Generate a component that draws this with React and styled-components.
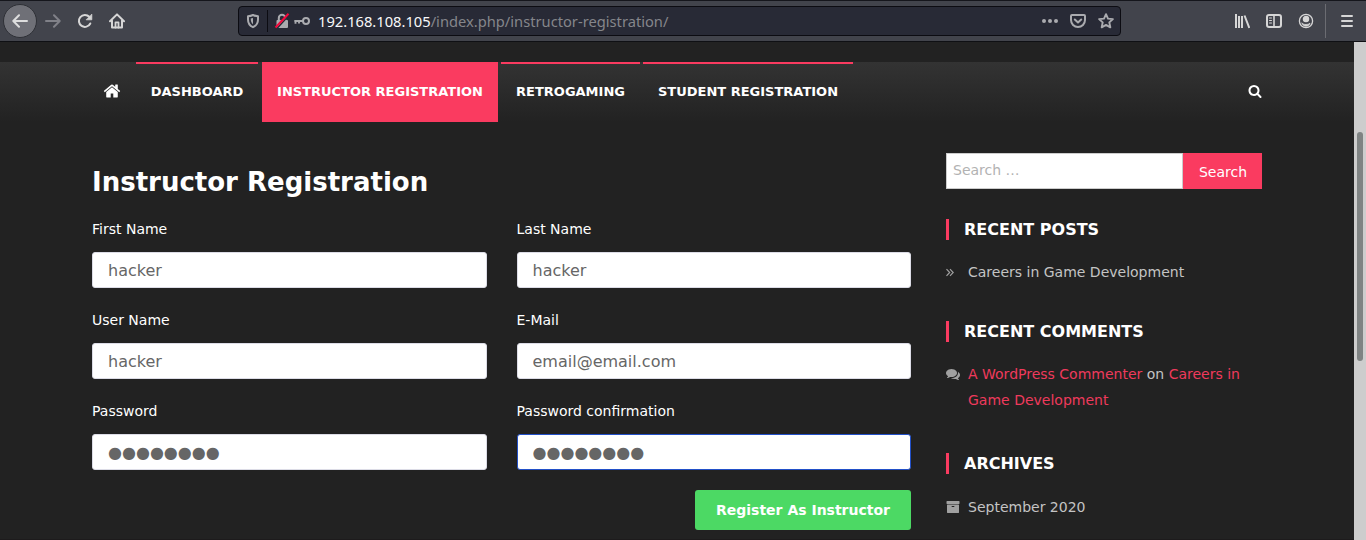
import React from "react";
import styled, { createGlobalStyle } from "styled-components";

const accent = "#fa3b60";

const GlobalStyle = createGlobalStyle`
  *, *::before, *::after { box-sizing: border-box; }
  html, body { margin: 0; height: 540px; overflow: hidden; background: #222; }
  body, input, button { font-family: "DejaVu Sans", sans-serif; }
  svg { display: block; }
`;

const Window = styled.div`
  display: flex;
  flex-direction: column;
  width: 1366px;
  height: 540px;
  overflow: hidden;
`;

/* ---- Browser toolbar ---- */
const Toolbar = styled.header`
  display: flex;
  align-items: center;
  flex: none;
  height: 42px;
  padding-left: 3px;
  background: #42444c;
  border-top: 1px solid #15161c;
  border-bottom: 1px solid #0f1014;
  color: #d6d6d6;
`;
const BackButton = styled.button`
  display: grid;
  place-items: center;
  width: 34px;
  height: 34px;
  padding: 0;
  border: 1px solid #2e3036;
  border-radius: 50%;
  background: #6f7077;
  color: #dedede;
`;
const ToolGroup = styled.div`
  display: flex;
  align-items: center;
  gap: ${(p) => p.$gap ?? 16}px;
  margin-left: ${(p) => p.$left}px;
`;
const Dim = styled.span`
  color: #808188;
`;
const UrlBar = styled.div`
  display: flex;
  align-items: center;
  width: 883px;
  height: 30px;
  margin-left: 113px;
  padding: 0 6px;
  border: 1px solid #0c0c12;
  border-radius: 4px;
  background: #282a36;
  color: #aaabaf;
`;
const BarRule = styled.i`
  width: 1px;
  height: ${(p) => p.$h}px;
  margin: 0 ${(p) => p.$r}px 0 ${(p) => p.$l}px;
  background: ${(p) => p.$c};
`;
const Url = styled.span`
  flex: 1;
  margin-left: 8px;
  font: 14.7px/20px "Noto Sans", sans-serif;
  white-space: nowrap;
  color: #85868b;
`;
const Host = styled.span`
  color: #f9f9fa;
`;

/* ---- Web page ---- */
const Viewport = styled.div`
  display: flex;
  flex: 1;
  min-height: 0;
`;
const Page = styled.div`
  flex: 1;
  padding-top: 20px;
  border-bottom: 1px solid #1d1b1c;
  background: #222;
`;
const Nav = styled.nav`
  display: flex;
  height: 60px;
  padding: 0 92px;
  background: linear-gradient(#333, #222);
`;
const HomeLink = styled.a`
  display: flex;
  align-items: center;
  width: 44px;
  padding: 0 0 2px 11px;
  color: #fff;
`;
const NavItem = styled.a`
  width: ${(p) => p.$w}px;
  margin-right: ${(p) => p.$gap}px;
  border-top: 2px solid ${accent};
  background: ${(p) => (p.$active ? accent : "transparent")};
  color: #fff;
  font-size: 13px;
  font-weight: 700;
  line-height: 56px;
  text-align: center;
  white-space: nowrap;
`;
const NavSearch = styled.a`
  display: flex;
  align-items: center;
  margin-left: auto;
  padding-bottom: 2px;
  color: #fff;
`;
const Columns = styled.div`
  display: flex;
  justify-content: space-between;
  padding: 31px 92px 0;
`;
const Main = styled.main`
  width: 819px;
`;
const Title = styled.h1`
  margin: 12px 0 19px;
  color: #fff;
  font-size: 26px;
  font-weight: 700;
  line-height: 35px;
`;
const Form = styled.form`
  display: grid;
  grid-template-columns: 1fr 1fr;
  column-gap: 30px;
  row-gap: 22px;
`;
const Field = styled.label`
  display: flex;
  flex-direction: column;
  gap: 13px;
  color: #fff;
  font-size: 14px;
  line-height: 20px;
`;
const Input = styled.input`
  width: 100%;
  height: 36px;
  padding: 0 15px;
  border: 1px solid ${(p) => (p.$focus ? "#2250c8" : "#dcdce6")};
  border-radius: 3px;
  outline: 0;
  background: #fff;
  color: #666;
  font-size: 16px;
`;
const Submit = styled.button`
  display: block;
  width: 216px;
  height: 40px;
  margin: 20px 0 0 auto;
  padding: 0;
  border: 0;
  border-radius: 3px;
  background: #4cd964;
  color: #fff;
  font-size: 14px;
  font-weight: 700;
`;

const Sidebar = styled.aside`
  width: 316px;
`;
const SearchForm = styled.form`
  display: flex;
  height: 36px;
  margin-bottom: 30px;
`;
const SearchInput = styled.input`
  width: 237px;
  padding: 0 6px 2px;
  border: 1px solid #ccc;
  border-radius: 0;
  background: #fff;
  font-size: 14px;
  &::placeholder { color: #b2b2b2; opacity: 1; }
`;
const SearchButton = styled.button`
  width: 79px;
  padding: 2px 0 0 1px;
  border: 0;
  background: ${accent};
  color: #fff;
  font-size: 14px;
`;
const Widget = styled.section`
  margin-bottom: ${(p) => p.$gap}px;
`;
const WidgetTitle = styled.h2`
  height: 21px;
  margin: 0 0 ${(p) => p.$below ?? 19}px;
  padding-left: 15px;
  border-left: 3px solid ${accent};
  color: #fff;
  font-size: 16px;
  font-weight: 700;
  line-height: 21px;
`;
const Entry = styled.div`
  display: flex;
  color: #c4c4c4;
  font-size: 14px;
  line-height: 26px;
`;
const EntryIcon = styled.span`
  display: flex;
  align-items: center;
  flex: none;
  width: 22px;
  height: 26px;
  color: #a0a0a0;
`;
const RedLink = styled.a`
  color: #ef3a5c;
`;

const ScrollTrack = styled.div`
  flex: none;
  width: 12px;
  padding: 90px 3px 0;
  background: #cdcdcd;
`;
const ScrollThumb = styled.div`
  height: 229px;
  border-radius: 3px;
  background: #7f8383;
`;

/* ---- Icons ---- */
const Line = ({ size = 16, sw = 2, children }) => (
  <svg width={size} height={size} viewBox="0 0 16 16" fill="none" stroke="currentColor" strokeWidth={sw} strokeLinecap="round" strokeLinejoin="round">
    {children}
  </svg>
);
const Awesome = ({ size, d }) => (
  <svg width={size} height={size} viewBox="0 0 1792 1792" fill="currentColor"><path d={d} /></svg>
);
const homePath = "M1472 992v480q0 26-19 45t-45 19h-384v-384h-256v384h-384q-26 0-45-19t-19-45v-480q0-1 .5-3t.5-3l575-474 575 474q1 2 1 6zm223-69l-62 74q-8 9-21 11h-3q-13 0-21-7l-692-577-692 577q-12 8-24 7-13-2-21-11l-62-74q-8-10-7-23.5t11-21.5l719-599q32-26 76-26t76 26l244 204v-195q0-14 9-23t23-9h192q14 0 23 9t9 23v408l219 182q10 8 11 21.5t-7 23.5z";
const searchPath = "M1216 832q0-185-131.5-316.5t-316.5-131.5-316.5 131.5-131.5 316.5 131.5 316.5 316.5 131.5 316.5-131.5 131.5-316.5zm512 832q0 52-38 90t-90 38q-54 0-90-38l-343-342q-179 124-399 124-143 0-273.5-55.5t-225-150-150-225-55.5-273.5 55.5-273.5 150-225 225-150 273.5-55.5 273.5 55.5 225 150 150 225 55.5 273.5q0 220-124 399l343 343q37 37 37 90z";
const commentsPath = "M1408 768q0 139-94 257t-256.5 186.5-353.5 68.5q-86 0-176-16-124 88-278 128-36 9-86 16h-3q-11 0-20.5-8t-11.5-21q-1-3-1-6.5t.5-6.5 2-6l2.5-5 3.5-5.5 4-5 4.5-5 4-4.5q5-6 23-25t26-29.5 22.5-29 25-38.5 20.5-44q-124-72-195-177t-71-224q0-139 94-257t256.5-186.5 353.5-68.5 353.5 68.5 256.5 186.5 94 257zm384 256q0 120-71 224.5t-195 176.5q10 24 20.5 44t25 38.5 22.5 29 26 29.5 23 25q1 1 4 4.5t4.5 5 4 5 3.5 5.5l2.5 5 2 6 .5 6.5-1 6.5q-3 14-13 22t-22 7q-50-7-86-16-154-40-278-128-90 16-176 16-271 0-472-132 58 4 88 4 161 0 309-45t264-129q125-92 192-212t67-254q0-77-23-152 129 71 204 178t75 230z";
const archivePath = "M1088 832q0-26-19-45t-45-19h-256q-26 0-45 19t-19 45 19 45 45 19h256q26 0 45-19t19-45zm576-192v960q0 26-19 45t-45 19h-1408q-26 0-45-19t-19-45v-960q0-26 19-45t45-19h1408q26 0 45 19t19 45zm64-448v256q0 26-19 45t-45 19h-1536q-26 0-45-19t-19-45v-256q0-26 19-45t45-19h1536q26 0 45 19t19 45z";

const ShieldIcon = () => (
  <Line><path d="M8 2c-1.800.8-3.300 1.100-5 1.200v3.300c0 3.500 1.600 6.200 5 7.700 3.400-1.500 5-4.200 5-7.700V3.200C11.300 3.100 9.800 2.800 8 2z" /><path d="M8 5v6.200C6.300 10 5.700 8 5.700 5.500z" fill="currentColor" stroke="none" /></Line>
);
const LockIcon = () => (
  <svg width="16" height="16" viewBox="0 0 16 16">
    <path d="M4.800 8V5a3.200 3.200 0 0 1 6.400 0v3" fill="none" stroke="currentColor" strokeWidth="2" />
    <rect x="2.500" y="7" width="11.500" height="8" rx="1" fill="currentColor" />
    <path d="M2.700 15.800 15.300 2" stroke="#282a36" strokeWidth="1.400" />
    <path d="M1.500 14.500 14.500 .8" stroke="#f5083c" strokeWidth="2" />
  </svg>
);
const KeyIcon = () => (
  <svg width="16" height="16" viewBox="0 0 16 16" fill="none" stroke="currentColor" strokeWidth="2">
    <circle cx="12" cy="8" r="3" /><path d="M9 8H.3M1.500 8v2.800M5 8v2.500" strokeWidth="1.900" />
  </svg>
);

const navItems = [
  { label: "DASHBOARD", w: 122, gap: 4 },
  { label: "INSTRUCTOR REGISTRATION", w: 236, gap: 3, active: true },
  { label: "RETROGAMING", w: 139, gap: 3 },
  { label: "STUDENT REGISTRATION", w: 210, gap: 0 },
];
const fields = [
  { label: "First Name", value: "hacker" },
  { label: "Last Name", value: "hacker" },
  { label: "User Name", value: "hacker" },
  { label: "E-Mail", value: "email@email.com" },
  { label: "Password", value: "●●●●●●●●" },
  { label: "Password confirmation", value: "●●●●●●●●", focus: true },
];

export default function App() {
  return (
    <Window>
      <GlobalStyle />
      <Toolbar>
        <BackButton aria-label="Back"><Line><path d="M15 8H1.500M7 2.300 1.300 8 7 13.700" /></Line></BackButton>
        <ToolGroup $left={8}>
          <Dim><Line><path d="M1 8h13.500M9 2.300 14.700 8 9 13.700" /></Line></Dim>
          <Line><path d="M12.300 3.800A6 6 0 1 0 13.300 10.500" /><path d="M14.800 1.500v5.300H9.500z" fill="currentColor" strokeWidth=".8" /></Line>
          <Line><path d="M1 8.300 8 1.400l7 6.900M3 7.500v7h10v-7" /><path d="M6.500 14.500V9.300h3v5.200" strokeWidth="1.800" /></Line>
        </ToolGroup>
        <UrlBar>
          <ShieldIcon />
          <BarRule $h={22} $l={6} $r={6} $c="#0c0c12" />
          <ToolGroup $left={0} $gap={4}>
            <LockIcon />
            <KeyIcon />
          </ToolGroup>
          <Url><Host>192.168.108.105</Host>/index.php/instructor-registration/</Url>
          <ToolGroup $left={0} $gap={12}>
            <svg width="16" height="16" viewBox="0 0 16 16" fill="currentColor"><circle cx="2" cy="8" r="2" /><circle cx="8" cy="8" r="2" /><circle cx="14" cy="8" r="2" /></svg>
            <Line><path d="M2 2h12a1 1 0 0 1 1 1v4a7 7 0 0 1-14 0V3a1 1 0 0 1 1-1z" /><path d="m4.800 6.500 3.200 3 3.200-3" /></Line>
            <Line sw={1.900}><path d="m8 1.200 2 4.400 4.900.5-3.600 3.300 1 4.900L8 11.900l-4.300 2.400 1-4.900L1.100 6.100 6 5.600z" /></Line>
          </ToolGroup>
        </UrlBar>
        <ToolGroup $left={113}>
          <svg width="16" height="16" viewBox="0 0 16 16" stroke="currentColor" strokeWidth="2"><path d="M2 1v14M5 3v12M8 3v12M10.500 2.500 15.300 15" /></svg>
          <Line><rect x="1" y="2" width="14" height="12" rx="2" /><path d="M8 2v12" strokeWidth="1.600" /><path d="M3.500 5h2M3.500 7.500h2M3.500 10h2" strokeWidth="1" /></Line>
          <Line sw={1.300}><circle cx="8" cy="8" r="6.600" /><circle cx="8" cy="6" r="2.600" fill="currentColor" /><path d="M4 10.200c1 .9 2.200 1.300 4 1.300s3-.4 4-1.300c-.5 1.800-2 3-4 3s-3.500-1.200-4-3z" fill="currentColor" strokeWidth=".8" /></Line>
        </ToolGroup>
        <BarRule $h={34} $l={11} $r={13} $c="#6b6c72" />
        <Line><path d="M3 3h10M3 8h10M3 13h10" /></Line>
      </Toolbar>
      <Viewport>
        <Page>
          <Nav>
            <HomeLink aria-label="Home"><Awesome size={18} d={homePath} /></HomeLink>
            {navItems.map((n) => (
              <NavItem key={n.label} $w={n.w} $gap={n.gap} $active={n.active}>{n.label}</NavItem>
            ))}
            <NavSearch aria-label="Search"><Awesome size={14} d={searchPath} /></NavSearch>
          </Nav>
          <Columns>
            <Main>
              <Title>Instructor Registration</Title>
              <Form>
                {fields.map((f) => (
                  <Field key={f.label}>
                    {f.label}
                    <Input defaultValue={f.value} $focus={f.focus} />
                  </Field>
                ))}
              </Form>
              <Submit>Register As Instructor</Submit>
            </Main>
            <Sidebar>
              <SearchForm>
                <SearchInput placeholder="Search …" />
                <SearchButton type="button">Search</SearchButton>
              </SearchForm>
              <Widget $gap={36}>
                <WidgetTitle>RECENT POSTS</WidgetTitle>
                <Entry>
                  <EntryIcon>
                    <svg width="8" height="10" viewBox="0 0 8 10" fill="none" stroke="currentColor" strokeWidth="1.200"><path d="m.5 2.200 3.200 3.300L.5 8.800M4 2.200l3.200 3.300L4 8.800" /></svg>
                  </EntryIcon>
                  Careers in Game Development
                </Entry>
              </Widget>
              <Widget $gap={40}>
                <WidgetTitle>RECENT COMMENTS</WidgetTitle>
                <Entry>
                  <EntryIcon><Awesome size={14} d={commentsPath} /></EntryIcon>
                  <span><RedLink>A WordPress Commenter</RedLink> on <RedLink>Careers in Game Development</RedLink></span>
                </Entry>
              </Widget>
              <Widget $gap={0}>
                <WidgetTitle $below={20}>ARCHIVES</WidgetTitle>
                <Entry>
                  <EntryIcon><Awesome size={14} d={archivePath} /></EntryIcon>
                  September 2020
                </Entry>
              </Widget>
            </Sidebar>
          </Columns>
        </Page>
        <ScrollTrack><ScrollThumb /></ScrollTrack>
      </Viewport>
    </Window>
  );
}
